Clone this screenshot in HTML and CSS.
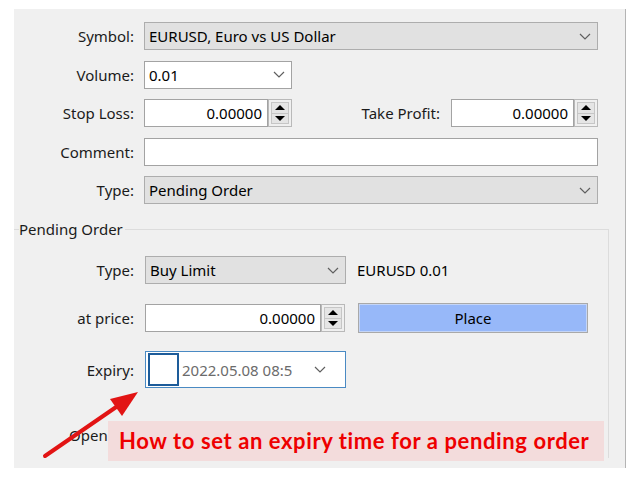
FILE: index.html
```html
<!DOCTYPE html>
<html lang="en">
<head>
    <meta charset="UTF-8">
    <title>New Order - Pending</title>
    <link rel="stylesheet" href="styles.css">
</head>
<body>
    <div class="panel">
        <!-- main order fields -->
        <div class="form">
            <div class="row">
                <span class="lbl">Symbol:</span>
                <div class="combo combo-gray grow">
                    <span class="combo-text">EURUSD, Euro vs US Dollar</span>
                    <svg class="chev" width="12" height="7" viewBox="0 0 12 7"><polyline points="1,1 6,6 11,1" /></svg>
                </div>
            </div>
            <div class="row">
                <span class="lbl">Volume:</span>
                <div class="combo combo-white w-volume">
                    <span class="combo-text">0.01</span>
                    <svg class="chev" width="12" height="7" viewBox="0 0 12 7"><polyline points="1,1 6,6 11,1" /></svg>
                </div>
            </div>
            <div class="row">
                <span class="lbl">Stop Loss:</span>
                <div class="split">
                    <div class="spin-field w-sl">
                        <div class="num">0.00000</div>
                        <div class="spin"><span class="up"></span><span class="down"></span></div>
                    </div>
                    <div class="tp">
                        <span class="tp-lbl">Take Profit:</span>
                        <div class="spin-field w-tp">
                            <div class="num">0.00000</div>
                            <div class="spin"><span class="up"></span><span class="down"></span></div>
                        </div>
                    </div>
                </div>
            </div>
            <div class="row">
                <span class="lbl">Comment:</span>
                <div class="text-box grow"></div>
            </div>
            <div class="row">
                <span class="lbl">Type:</span>
                <div class="combo combo-gray grow">
                    <span class="combo-text">Pending Order</span>
                    <svg class="chev" width="12" height="7" viewBox="0 0 12 7"><polyline points="1,1 6,6 11,1" /></svg>
                </div>
            </div>
        </div>

        <!-- pending order group -->
        <fieldset class="group">
            <legend>Pending Order</legend>
            <div class="group-rows">
                <div class="row">
                    <span class="lbl lbl-group">Type:</span>
                    <div class="combo combo-gray w-ptype">
                        <span class="combo-text">Buy Limit</span>
                        <svg class="chev" width="12" height="7" viewBox="0 0 12 7"><polyline points="1,1 6,6 11,1" /></svg>
                    </div>
                    <span class="info">EURUSD 0.01</span>
                </div>
                <div class="row row-price">
                    <span class="lbl lbl-group">at price:</span>
                    <div class="spin-field w-price">
                        <div class="num">0.00000</div>
                        <div class="spin"><span class="up"></span><span class="down"></span></div>
                    </div>
                    <button class="place">Place</button>
                </div>
                <div class="row row-expiry">
                    <span class="lbl lbl-group">Expiry:</span>
                    <div class="expiry">
                        <span class="check"></span>
                        <span class="expiry-text">2022.05.08 08:5</span>
                        <svg class="chev" width="12" height="7" viewBox="0 0 12 7"><polyline points="1,1 6,6 11,1" /></svg>
                    </div>
                </div>
                <div class="row row-open">
                    <span class="lbl lbl-group">Open on:</span>
                </div>
            </div>
        </fieldset>
    </div>

    <!-- annotation -->
    <div class="note">How to set an expiry time for a pending order</div>
    <svg class="arrow" width="640" height="480" viewBox="0 0 640 480">
        <line x1="45" y1="456" x2="122" y2="403" />
        <polygon points="138,392 110,399 122,416" />
    </svg>
</body>
</html>
```

FILE: styles.css
```css
body {
    margin: 0;
    background-color: #ffffff;
    font-family: 'Noto Sans', 'Open Sans', sans-serif;
    font-size: 15px;
    color: #1b1b1b;
    position: relative;
    width: 640px;
    height: 480px;
    overflow: hidden;
}

.panel {
    box-sizing: border-box;
    margin: 9px 0 0 14px;
    width: 612px;
    height: 459px;
    padding-top: 13px;
    background-color: #f0f0f0;
    border-right: 1px solid #b4b4b4;
}

.form {
    display: flex;
    flex-direction: column;
    gap: 10.5px;
    padding-right: 27px;
}

.row {
    display: flex;
    align-items: center;
    height: 28px;
    gap: 10px;
}

.lbl {
    width: 120px;
    flex-shrink: 0;
    text-align: right;
    white-space: nowrap;
}

.grow {
    flex: 1;
}

.combo {
    box-sizing: border-box;
    height: 28px;
    display: flex;
    align-items: center;
    padding: 0 6px 0 4px;
    border: 1px solid #adadad;
}

.combo-gray {
    background-color: #e1e1e1;
}

.combo-white {
    background-color: #ffffff;
    border-color: #a3a3a3;
}

.combo-text {
    flex: 1;
    color: #000000;
}

.chev {
    fill: none;
    stroke: #5f5f5f;
    stroke-width: 1.2;
}

.w-volume {
    width: 148px;
}

.split {
    flex: 1;
    display: flex;
    justify-content: space-between;
    align-items: center;
}

.tp {
    display: flex;
    align-items: center;
    gap: 11px;
}

.spin-field {
    display: flex;
    height: 28px;
}

.num {
    flex: 1;
    box-sizing: border-box;
    height: 28px;
    line-height: 26px;
    background-color: #ffffff;
    border: 1px solid #a3a3a3;
    text-align: right;
    padding-right: 5px;
    color: #000000;
}

.spin {
    box-sizing: border-box;
    width: 24px;
    height: 28px;
    border: 1px solid #b9b9b9;
    background-color: #f0f0f0;
    padding: 2px;
    display: flex;
    flex-direction: column;
}

.spin span {
    flex: 1;
    display: flex;
    align-items: center;
    justify-content: center;
    background-color: #e5e5e5;
    border: 1px solid #c6c6c6;
}

.spin .up {
    border-bottom: none;
}

.spin .up::before {
    content: "";
    border-left: 5px solid transparent;
    border-right: 5px solid transparent;
    border-bottom: 5px solid #000000;
}

.spin .down::before {
    content: "";
    border-left: 5px solid transparent;
    border-right: 5px solid transparent;
    border-top: 5px solid #000000;
}

.w-sl {
    width: 148px;
}

.w-tp {
    width: 147px;
}

.text-box {
    box-sizing: border-box;
    height: 28px;
    background-color: #ffffff;
    border: 1px solid #a3a3a3;
}

.group {
    margin: 15px 16px 0 0;
    padding: 17px 0 9px 5px;
    border: 1px solid #dcdcdc;
    border-left: none;
    border-bottom: none;
    min-width: 0;
}

.group legend {
    padding: 0 2px 0 0;
    line-height: 20px;
}

.group-rows {
    display: flex;
    flex-direction: column;
}

.lbl-group {
    width: 115px;
}

.group .row {
    gap: 11px;
}

.w-ptype {
    width: 201px;
}

.info {
    color: #000000;
}

.row-price {
    margin-top: 19px;
    height: 30px;
}

.w-price {
    width: 200px;
}

.place {
    box-sizing: border-box;
    width: 230px;
    height: 30px;
    margin-left: 2px;
    font-family: inherit;
    font-size: 15px;
    color: #000000;
    background-color: #97b8f9;
    border: 1px solid #a9a9a9;
    box-shadow: inset 0 0 0 1px #c4d5f7;
}

.row-expiry {
    margin-top: 18px;
    height: 37px;
}

.expiry {
    box-sizing: border-box;
    width: 201px;
    height: 37px;
    display: flex;
    align-items: center;
    padding: 0 19px 0 2px;
    background-color: #ffffff;
    border: 1px solid #4a8ac3;
}

.check {
    box-sizing: border-box;
    width: 31px;
    height: 33px;
    border: 2px solid #1d5c9a;
    background-color: #ffffff;
}

.expiry-text {
    flex: 1;
    margin-left: 3px;
    color: #6b6b6b;
}

.row-open {
    margin-top: 33px;
}

.note {
    position: absolute;
    left: 108px;
    top: 421px;
    width: 496px;
    height: 40px;
    box-sizing: border-box;
    padding-left: 11px;
    line-height: 40px;
    background-color: #f3dcdc;
    color: #ee0000;
    font-family: Lato, 'Open Sans', sans-serif;
    font-weight: 700;
    font-size: 22px;
    letter-spacing: 0.6px;
    white-space: nowrap;
}

.arrow {
    position: absolute;
    left: 0;
    top: 0;
    pointer-events: none;
}

.arrow line {
    stroke: #e21414;
    stroke-width: 4;
    stroke-linecap: round;
}

.arrow polygon {
    fill: #e21414;
}
```
